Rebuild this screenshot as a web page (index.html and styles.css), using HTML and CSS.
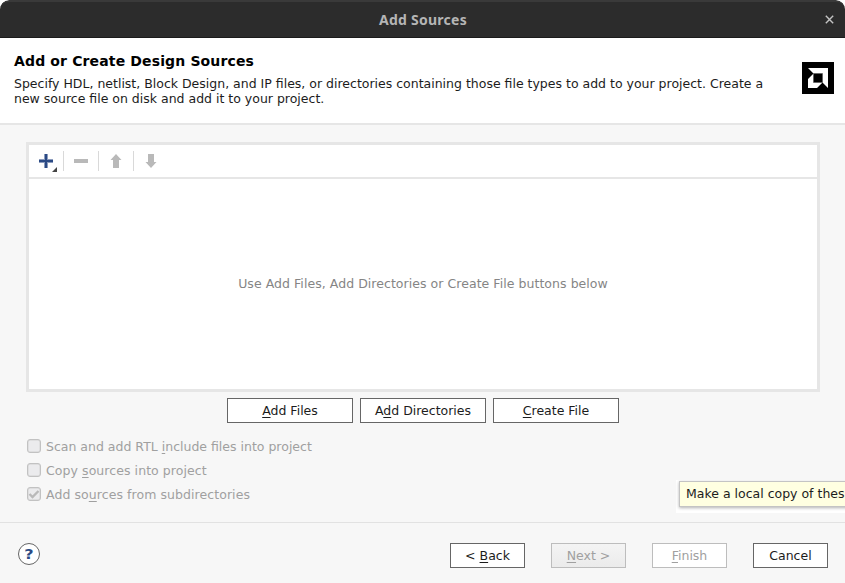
FILE: index.html
```html
<!DOCTYPE html>
<html lang="en">
<head>
<meta charset="utf-8">
<title>Add Sources</title>
<link rel="stylesheet" href="styles.css">
</head>
<body>
<div class="dialog">
  <div class="titlebar">
    <span class="title">Add Sources</span>
    <svg class="close" width="9" height="9" viewBox="0 0 9 9"><path d="M.8.8l7.400 7.400M8.200.8L.8 8.200" stroke="#c4c4c4" stroke-width="1.400" fill="none"/></svg>
  </div>
  <header class="header">
    <div class="intro">
      <h1>Add or Create Design Sources</h1>
      <p>Specify HDL, netlist, Block Design, and IP files, or directories containing those file types to add to your project. Create a<br>new source file on disk and add it to your project.</p>
    </div>
    <svg class="logo" width="32" height="32" viewBox="0 0 32 32"><path fill="#000" d="M0 0h32v32H0z"/><path fill="#fff" d="M6 6h20v20l-5.500-5.500v-9h-9zM11.500 11.500v9h9L15 26H6v-9z"/><path fill="none" stroke="#555" stroke-width=".6" d="M11.500 11.500h9v9h-9z"/></svg>
  </header>
  <main class="content">
    <section class="panel">
      <div class="toolbar">
        <svg class="tool" width="34" height="32" viewBox="0 0 34 32"><path d="M10 16h14M17 9v14" stroke="#8c9cbd" stroke-width="4"/><path d="M10 16h14M17 9v14" stroke="#2b4a85" stroke-width="2"/><path d="M28 22v5h-5z" fill="#444"/></svg>
        <i class="sep"></i>
        <svg class="tool" width="34" height="32" viewBox="0 0 34 32"><path d="M10 14h14v4H10z" fill="#b9b9b9"/></svg>
        <i class="sep"></i>
        <svg class="tool" width="34" height="32" viewBox="0 0 34 32"><path d="M17 9l5.500 6H20v8h-6v-8h-2.500z" fill="#b9b9b9"/></svg>
        <i class="sep"></i>
        <svg class="tool" width="34" height="32" viewBox="0 0 34 32"><path d="M17 23l5.500-6H20V9h-6v8h-2.500z" fill="#b9b9b9"/></svg>
      </div>
      <div class="empty"><span>Use Add Files, Add Directories or Create File buttons below</span></div>
    </section>
    <div class="actions">
      <button class="btn wide"><span><u>A</u>dd Files</span></button>
      <button class="btn wide"><span>A<u>d</u>d Directories</span></button>
      <button class="btn wide"><span><u>C</u>reate File</span></button>
    </div>
    <div class="options">
      <div class="option"><i class="box"></i><span>Scan and add RTL <u>i</u>nclude files into project</span></div>
      <div class="option loose"><i class="box"></i><span>Copy <u>s</u>ources into project</span></div>
      <div class="option loose"><i class="box"><svg width="12" height="12" viewBox="0 0 12 12"><path d="M1.500 6l3 3 6-6" fill="none" stroke="#b9b9b9" stroke-width="2.400"/></svg></i><span>Add so<u>u</u>rces from subdirectories</span></div>
    </div>
  </main>
  <footer class="footer">
    <span class="help"><b>?</b></span>
    <div class="nav">
      <button class="btn"><span>&lt; <u>B</u>ack</span></button>
      <button class="btn off shaded"><span><u>N</u>ext &gt;</span></button>
      <button class="btn off"><span><u>F</u>inish</span></button>
      <button class="btn"><span>Cancel</span></button>
    </div>
  </footer>
  <div class="tipwrap"><div class="tip"><span>Make a local copy of thes</span></div></div>
</div>
</body>
</html>
```

FILE: styles.css
```css
* { box-sizing: border-box; }
body { margin: 0; background: #fff; overflow: hidden; }
.dialog {
  position: relative; width: 845px; height: 583px; overflow: hidden;
  display: flex; flex-direction: column;
  background: #f7f7f7; border-radius: 9px 9px 0 0;
  font: 12.5px/15px "DejaVu Sans", sans-serif; color: #1c1c1c;
}
.titlebar {
  height: 38px; flex: none; display: flex; align-items: center; justify-content: center;
  position: relative; background: #2c2c2c; border-top: 2px solid #3a3a3a; border-bottom: 1px solid #1b1b1b;
  border-radius: 9px 9px 0 0;
}
.title { font: bold 14px/20px "Noto Sans", sans-serif; letter-spacing: .25px; color: #b5b5b5; padding: 1px 0 0 1px; }
.close { position: absolute; right: 11px; top: 13px; }
.header {
  height: 87px; flex: none; display: flex; justify-content: space-between;
  background: #fff; border-bottom: 2px solid #e6e6e6; padding: 15px 11px 0 14px;
}
h1 { margin: 0 0 7px; font: bold 14px/16px "DejaVu Sans", sans-serif; letter-spacing: .14px; color: #000; }
p { margin: 0; white-space: nowrap; }
.logo { margin-top: 9px; flex: none; }
.content { flex: 1; padding: 17px 25px 0 26px; }
.panel { height: 250px; border: 3px solid #e6e6e6; background: #fff; display: flex; flex-direction: column; }
.toolbar { height: 34px; flex: none; border-bottom: 2px solid #e6e6e6; display: flex; align-items: center; }
.tool { flex: none; }
.sep { width: 1px; height: 20px; background: #d9d9d9; }
.empty { flex: 1; display: flex; align-items: center; justify-content: center; letter-spacing: .05px; color: #858585; padding-bottom: 1px; }
.actions { display: flex; justify-content: center; gap: 7px; margin-top: 6px; }
.btn {
  width: 75px; height: 25px; padding: 0; border: 1px solid #666; background: #fff;
  font: inherit; color: #1c1c1c;
}
.wide { width: 126px; }
.off { border-color: #bdbdbd; color: #a0a0a0; }
.shaded { background: linear-gradient(#f4f4f4, #ebebeb); }
u { text-decoration-thickness: 1px; text-underline-offset: 2px; text-decoration-skip-ink: none; }
.options { margin-top: 11px; padding-left: 1px; color: #a0a0a0; }
.option { height: 24px; display: flex; align-items: center; gap: 5px; }
.loose { letter-spacing: .07px; }
.box { width: 14px; height: 14px; border: 1px solid #c2c2c2; border-radius: 3px; background: #ebebed; box-shadow: inset 0 0 0 .5px #d2d2d2; }
.box svg { display: block; }
.footer {
  height: 61px; flex: none; border-top: 1px solid #e2e2e2;
  display: flex; justify-content: space-between; padding: 20px 17px 0 18px;
}
.help {
  width: 22px; height: 22px; border: 1px solid #666; border-radius: 50%; background: #fff;
  font-size: 14px; line-height: 20px; text-align: center; color: #2b4a85;
}
.help b { display: block; transform: scaleX(1.15); }
.nav { display: flex; gap: 26px; }
.tipwrap { position: absolute; left: 676px; top: 480px; width: 169px; height: 33px; overflow: hidden; background: #fff; padding: 1px 0 0 3px; }
.tip {
  width: 200px; height: 26px; border: 1px solid #c4c4c4; background: #ffffe1; padding: 4px 6px;
  white-space: nowrap; box-shadow: 0 1px 3px rgba(0,0,0,.3);
}
```
